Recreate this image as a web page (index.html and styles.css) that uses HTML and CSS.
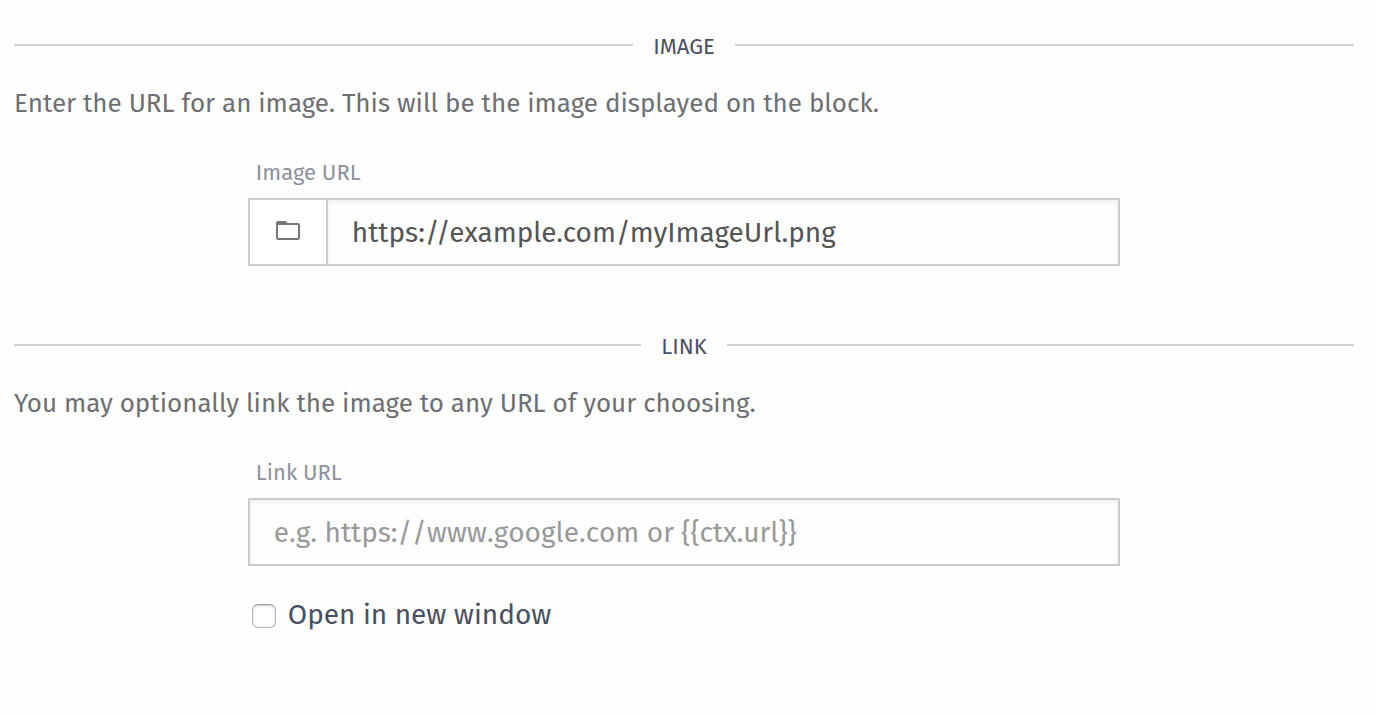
FILE: index.html
```html
<!DOCTYPE html>
<html lang="en">
<head>
<meta charset="utf-8">
<title>Image block</title>
<link rel="stylesheet" href="styles.css">
</head>
<body>
<form class="settings">
  <section class="section">
    <h2 class="divider">IMAGE</h2>
    <p class="intro">Enter the URL for an image. This will be the image displayed on the block.</p>
    <div class="field">
      <label class="label" for="image-url">Image URL</label>
      <div class="group">
        <button class="browse" type="button" aria-label="Browse files">
          <svg class="folder" viewBox="0 0 24 20" aria-hidden="true"><path fill="none" stroke="currentColor" stroke-width="2" d="M1 17V3.500Q1 3 2 3H22Q23 3 23 4V17Q23 18 22 18H2Q1 18 1 17Z"/><path fill="currentColor" d="M0 4V2Q0 0 2 0H9Q10 0 10.500 1L11.500 2V4Z"/></svg>
        </button>
        <input class="input" id="image-url" type="text" value="https://example.com/myImageUrl.png">
      </div>
    </div>
  </section>
  <section class="section">
    <h2 class="divider">LINK</h2>
    <p class="intro">You may optionally link the image to any URL of your choosing.</p>
    <div class="field">
      <label class="label" for="link-url">Link URL</label>
      <div class="group">
        <input class="input" id="link-url" type="text" placeholder="e.g. https://www.google.com or {{ctx.url}}">
      </div>
      <label class="check"><input class="box" type="checkbox">Open in new window</label>
    </div>
  </section>
</form>
</body>
</html>
```
FILE: styles.css
```css
* { box-sizing: border-box; }
body {
  margin: 0;
  background: #fefefe;
  color: #4b5060;
  font-family: "Fira Sans", "Noto Sans", sans-serif;
}
.settings { padding: 31px 22px 0 14px; }
.section { margin-bottom: 65px; }
.divider {
  display: flex;
  align-items: center;
  gap: 20px;
  margin: 0;
  font-size: 22px;
  font-weight: 400;
  line-height: 32px;
}
.divider::before, .divider::after {
  content: "";
  flex: 1;
  height: 2px;
  margin-bottom: 4px;
  background: #d2d2d2;
}
.intro {
  margin: 24px 0 0;
  color: #6e6f72;
  font-size: 26px;
  line-height: 34px;
}
.field { width: 65.1%; margin: 37px auto 0; }
.label {
  display: block;
  padding-left: 8px;
  color: #8d919c;
  font-size: 22px;
  line-height: 30px;
}
.group { display: flex; height: 68px; margin-top: 10px; }
.browse {
  display: flex;
  align-items: center;
  justify-content: center;
  width: 78px;
  padding: 0 0 2px;
  border: 2px solid #ccc;
  border-right: 0;
  background: #fff;
  color: #777;
}
.folder { width: 24px; height: 20px; }
.input {
  flex: 1;
  min-width: 0;
  padding: 0 24px;
  border: 2px solid #ccc;
  border-radius: 0;
  background: #fefefe;
  box-shadow: inset 0 2px 4px #eee;
  color: #555;
  font: inherit;
  font-size: 28px;
}
.input::placeholder { color: #999; opacity: 1; font-kerning: none; }
.check {
  display: flex;
  align-items: center;
  gap: 12px;
  margin-top: 32px;
  padding-left: 4px;
  font-size: 28px;
  line-height: 34px;
}
.box {
  appearance: none;
  width: 24px;
  height: 24px;
  margin: 2px 0 0;
  border: 1px solid #b4b4b4;
  border-top-color: #999;
  border-radius: 6px;
  background: #fff;
  box-shadow: inset 0 1px 2px #ccc;
}
```
